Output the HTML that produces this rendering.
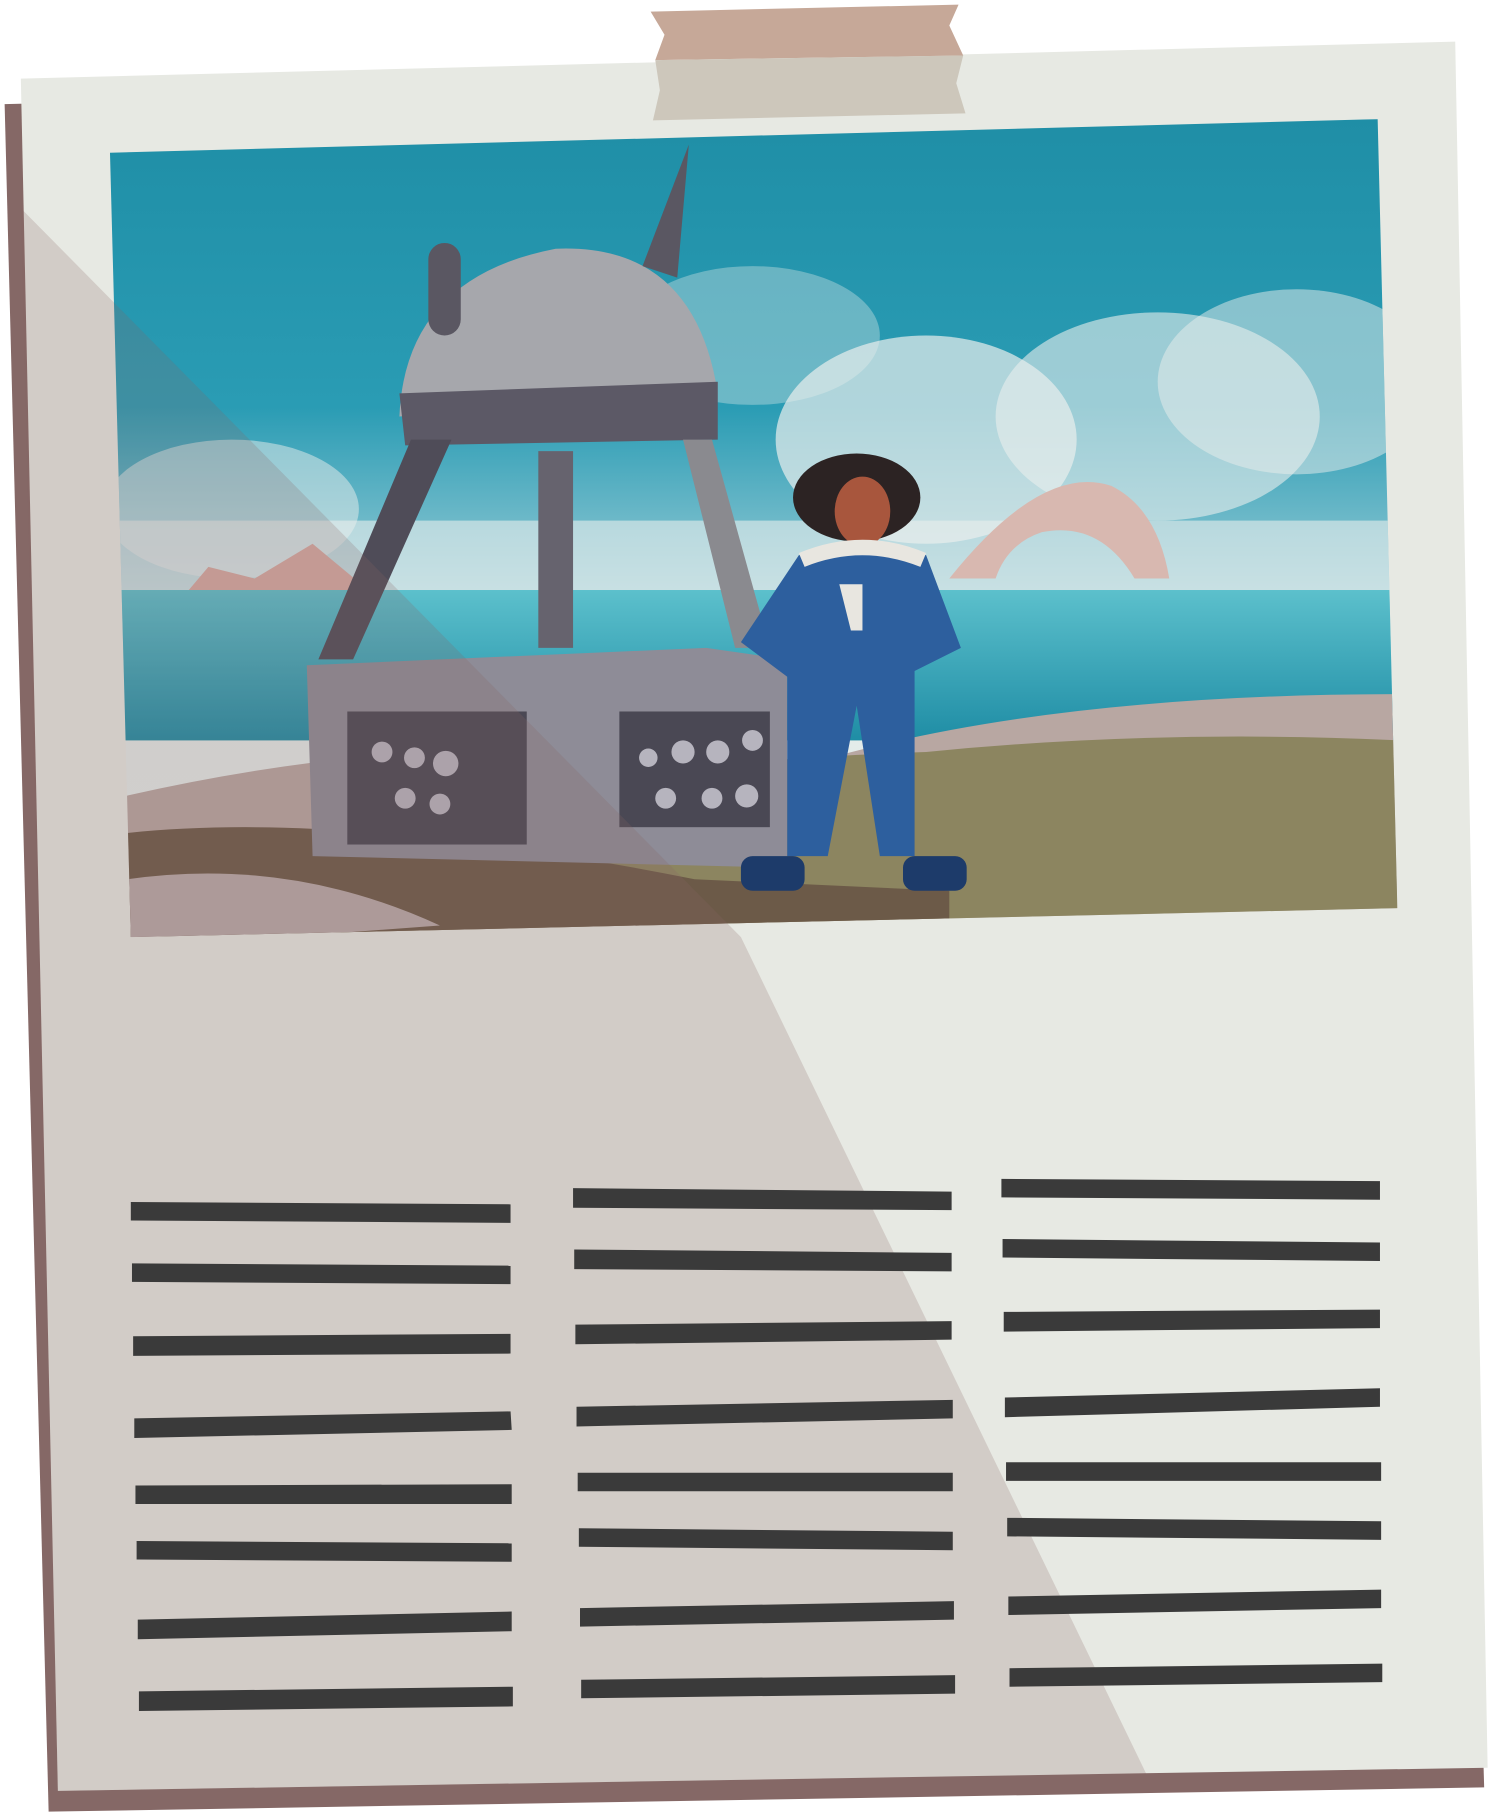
<!DOCTYPE html>
<html><head><meta charset="utf-8"><style>html,body{margin:0;padding:0;background:#fff;}svg{display:block}</style></head>
<body>
<svg width="1505" height="1814" viewBox="0 0 1300 1568" preserveAspectRatio="none" xmlns="http://www.w3.org/2000/svg">
<defs>
<clipPath id="ph"><polygon points="95,132 1190,103 1207,785 113,810"/></clipPath>
<linearGradient id="sky" x1="0" y1="0" x2="0" y2="1">
<stop offset="0" stop-color="#1f8ea6"/><stop offset="0.35" stop-color="#2a9cb4"/><stop offset="0.55" stop-color="#8cc6d2"/><stop offset="0.72" stop-color="#e3ecea"/><stop offset="1" stop-color="#e6eeec"/></linearGradient>
<linearGradient id="sea" x1="0" y1="0" x2="0" y2="1"><stop offset="0" stop-color="#5cc0cc"/><stop offset="1" stop-color="#1f8da5"/></linearGradient>
</defs>
<polygon points="4,90 1240,60 1282,1545 42,1566" fill="#856866"/>
<polygon points="18,68 1257,36 1285,1528 50,1548" fill="#e7e9e3"/>
<g clip-path="url(#ph)">
<rect x="90" y="100" width="1120" height="720" fill="url(#sky)"/>
<g fill="#e9eeec">
<ellipse cx="650" cy="290" rx="110" ry="60" opacity="0.35"/>
<ellipse cx="800" cy="380" rx="130" ry="90" opacity="0.7"/>
<ellipse cx="1000" cy="360" rx="140" ry="90" opacity="0.6"/>
<ellipse cx="1120" cy="330" rx="120" ry="80" opacity="0.5"/>
<ellipse cx="200" cy="440" rx="110" ry="60" opacity="0.5"/>
<rect x="100" y="450" width="1110" height="70" opacity="0.6"/>
</g>
<path d="M820,500 Q900,400 960,420 Q1000,440 1010,500 L980,500 Q950,450 900,460 Q870,470 860,500Z" fill="#d8b8b0"/>
<polygon points="125,555 180,490 220,500 270,470 330,520 330,555" fill="#d5aaa2"/>
<rect x="100" y="510" width="1110" height="130" fill="url(#sea)"/>
<path d="M100,690 Q400,620 700,660 Q900,600 1210,600 L1210,820 L100,820Z" fill="#b8a7a2"/>
<path d="M260,720 Q500,660 800,650 Q1000,630 1210,640 L1210,820 L300,820Z" fill="#8c8560"/>
<path d="M110,720 Q300,700 600,760 L820,770 L820,800 L110,810Z" fill="#6c5a48"/>
<path d="M110,760 Q250,740 380,800 L110,820Z" fill="#b8aaa8"/>
<path d="M345,360 Q350,240 480,215 Q600,210 620,340 Z" fill="#a6a7ac"/>
<rect x="370" y="210" width="28" height="80" rx="14" fill="#5a5762"/>
<polygon points="555,230 595,125 585,240" fill="#5a5762"/>
<path d="M345,340 L620,330 L620,380 L350,385Z" fill="#5c5966"/>
<polygon points="355,380 390,380 305,570 275,570" fill="#4f4c58"/>
<polygon points="465,390 495,390 495,560 465,560" fill="#66636e"/>
<polygon points="590,380 615,380 665,560 635,560" fill="#8a8a8f"/>
<path d="M265,575 L610,560 L680,570 L680,750 L270,740Z" fill="#8e8c97"/>
<rect x="300" y="615" width="155" height="115" fill="#4a4854"/>
<rect x="535" y="615" width="130" height="100" fill="#4a4854"/>
<g fill="#b6b4be"><circle cx="330" cy="650" r="9"/><circle cx="358" cy="655" r="9"/><circle cx="385" cy="660" r="11"/><circle cx="350" cy="690" r="9"/><circle cx="380" cy="695" r="9"/>
<circle cx="560" cy="655" r="8"/><circle cx="590" cy="650" r="10"/><circle cx="620" cy="650" r="10"/><circle cx="650" cy="640" r="9"/><circle cx="575" cy="690" r="9"/><circle cx="615" cy="690" r="9"/><circle cx="645" cy="688" r="10"/></g>
<ellipse cx="740" cy="430" rx="55" ry="38" fill="#2c2323"/>
<ellipse cx="745" cy="442" rx="24" ry="30" fill="#a8563d"/>
<path d="M690,480 Q745,460 800,480 L830,560 L790,580 L790,740 L760,740 L740,610 L715,740 L680,740 L680,585 L640,555Z" fill="#2d5f9e"/>
<path d="M690,478 Q745,455 800,478 L795,490 Q745,470 695,490Z" fill="#e8e6e0"/>
<rect x="640" y="740" width="55" height="30" rx="10" fill="#1d3b6a"/>
<rect x="780" y="740" width="55" height="30" rx="10" fill="#1d3b6a"/>
<polygon points="725,505 745,505 745,545 735,545" fill="#e8e6e0"/>
</g>
<polygon points="18,180 640,810 990,1533 50,1548" fill="#8a6566" opacity="0.22"/>
<polygon points="562,10 828,4 820,22 832,48 566,52 574,30" fill="#c6a898"/>
<polygon points="566,52 832,48 826,72 834,98 564,104 570,78" fill="#cdc7bb"/>
<g fill="#3a3a3a">
<polygon points="113,1039 441,1041 441,1057 113,1055"/>
<polygon points="114,1092 441,1094 441,1110 114,1108"/>
<polygon points="115,1155 441,1153 441,1170 115,1172"/>
<polygon points="116,1226 441,1220 442,1236 116,1243"/>
<polygon points="117,1284 442,1283 442,1300 117,1300"/>
<polygon points="118,1332 442,1334 442,1350 118,1348"/>
<polygon points="119,1400 442,1393 442,1410 119,1417"/>
<polygon points="120,1462 443,1458 443,1475 120,1479"/>
<polygon points="495,1027 822,1030 822,1046 495,1044"/>
<polygon points="496,1080 822,1083 822,1099 496,1097"/>
<polygon points="497,1145 822,1142 822,1158 497,1162"/>
<polygon points="498,1216 823,1210 823,1226 498,1233"/>
<polygon points="499,1273 823,1273 823,1289 499,1289"/>
<polygon points="500,1321 823,1324 823,1340 500,1337"/>
<polygon points="501,1390 824,1384 824,1400 501,1406"/>
<polygon points="502,1452 825,1448 825,1464 502,1468"/>
<polygon points="865,1019 1192,1021 1192,1037 865,1035"/>
<polygon points="866,1071 1192,1074 1192,1090 866,1087"/>
<polygon points="867,1134 1192,1132 1192,1148 867,1151"/>
<polygon points="868,1208 1192,1200 1192,1216 868,1225"/>
<polygon points="869,1264 1193,1264 1193,1280 869,1280"/>
<polygon points="870,1312 1193,1315 1193,1331 870,1328"/>
<polygon points="871,1380 1193,1374 1193,1390 871,1396"/>
<polygon points="872,1442 1194,1438 1194,1454 872,1458"/>
</g>
</svg>
</body></html>
